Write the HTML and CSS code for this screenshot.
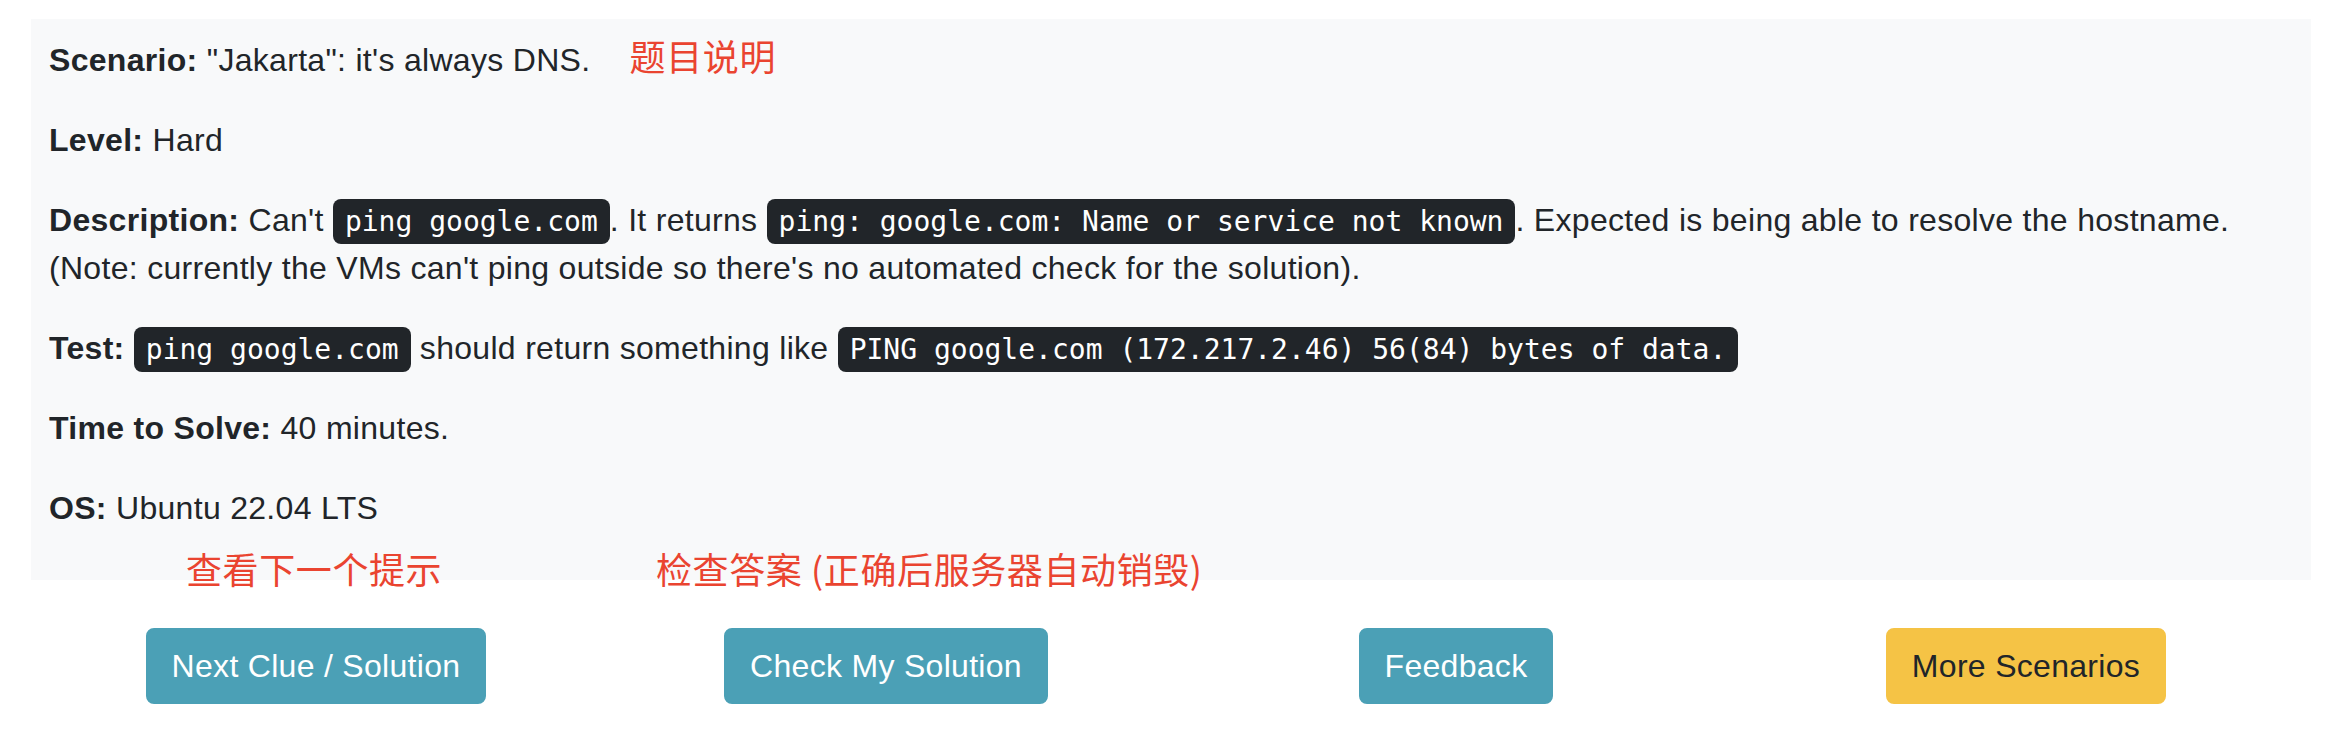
FILE: index.html
```html
<!DOCTYPE html>
<html lang="en">
<head>
<meta charset="utf-8">
<title>Scenario</title>
<link rel="stylesheet" href="styles.css">
</head>
<body>
<div class="page">
  <section class="panel">
    <p><strong>Scenario:</strong> "Jakarta": it's always DNS. <span class="note note-inline">题目说明</span></p>
    <p><strong>Level:</strong> Hard</p>
    <p><strong>Description:</strong> Can't <kbd>ping google.com</kbd>. It returns <kbd>ping: google.com: Name or service not known</kbd>. Expected is being able to resolve the hostname. (Note: currently the VMs can't ping outside so there's no automated check for the solution).</p>
    <p><strong>Test:</strong> <kbd>ping google.com</kbd> should return something like <kbd>PING google.com (172.217.2.46) 56(84) bytes of data.</kbd></p>
    <p><strong>Time to Solve:</strong> 40 minutes.</p>
    <p><strong>OS:</strong> Ubuntu 22.04 LTS</p>
  </section>
  <span class="note note-clue">查看下一个提示</span>
  <span class="note note-check">检查答案 (正确后服务器自动销毁)</span>
  <div class="actions">
    <div class="col"><button class="btn btn-info">Next Clue / Solution</button></div>
    <div class="col"><button class="btn btn-info">Check My Solution</button></div>
    <div class="col"><button class="btn btn-info">Feedback</button></div>
    <div class="col"><button class="btn btn-warning">More Scenarios</button></div>
  </div>
</div>
</body>
</html>
```
FILE: styles.css
```css
* { box-sizing: border-box; }
html, body { margin: 0; padding: 0; background: #fff; }
body {
  font-family: "Liberation Sans", Arial, "Noto Sans CJK SC", sans-serif;
  font-size: 32px;
  line-height: 48px;
  letter-spacing: 0.3px;
  color: #212529;
}
.page {
  position: relative;
  padding: 19px 27px 0 31px;
}
.panel {
  background: #f8f9fa;
  padding: 16px 16px 16px 18px;
}
.panel p { margin: 0 0 32px 0; }
.panel strong { font-weight: 700; }
kbd {
  font-family: "DejaVu Sans Mono", "Liberation Mono", monospace;
  font-size: 28px;
  line-height: 1;
  letter-spacing: 0;
  background: #212529;
  color: #fff;
  padding: 6px 12px;
  border-radius: 8px;
}
.note {
  font-family: "Noto Sans CJK SC", sans-serif;
  color: #ea4430;
  font-size: 36px;
  line-height: 40px;
  letter-spacing: 0.6px;
}
.note-inline { margin-left: 30px; }
.note-clue { position: absolute; left: 186px; top: 548px; }
.note-check { position: absolute; left: 656px; top: 548px; }
.actions {
  display: grid;
  grid-template-columns: repeat(4, 1fr);
  margin-top: 48px;
}
.col { display: flex; justify-content: center; }
.btn {
  font-family: "Liberation Sans", Arial, sans-serif;
  font-size: 32px;
  line-height: 48px;
  letter-spacing: 0.3px;
  padding: 12px 24px;
  border: 2px solid transparent;
  border-radius: 8px;
  cursor: pointer;
}
.btn-info { background: #4ba0b6; border-color: #4ba0b6; color: #fff; }
.btn-warning { background: #f5c345; border-color: #f5c345; color: #212529; }
```
